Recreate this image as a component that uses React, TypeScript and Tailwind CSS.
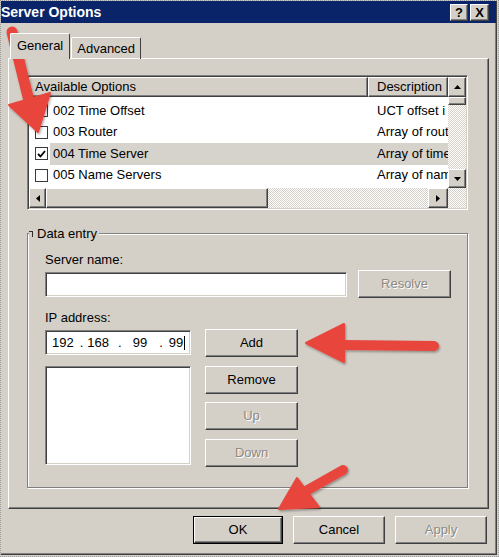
import React from "react";

const raised =
  "bg-[#d4d0c8] border border-t-white border-l-white border-r-[#404040] border-b-[#404040] shadow-[inset_-1px_-1px_0_#808080]";
const sunken =
  "bg-white border border-t-[#808080] border-l-[#808080] border-r-white border-b-white shadow-[inset_1px_1px_0_#404040,inset_-1px_-1px_0_#d4d0c8]";
const checker =
  "bg-[image:repeating-conic-gradient(#ffffff_0_25%,#d4d0c8_0_50%)] bg-[length:2px_2px]";
const disabledText = "text-[#8c8a85] [text-shadow:1px_1px_0_#ffffff]";

type Opt = { code: string; desc: string; checked: boolean; selected?: boolean };

// description column is scrolled/clipped in the dialog, only the visible part is kept
const options: Opt[] = [
  { code: "002 Time Offset", desc: "UCT offset i", checked: true },
  { code: "003 Router", desc: "Array of rout", checked: false },
  { code: "004 Time Server", desc: "Array of time", checked: true, selected: true },
  { code: "005 Name Servers", desc: "Array of nam", checked: false },
];

function Arrow({ dir }: { dir: "up" | "down" | "left" | "right" }) {
  const pts = {
    up: "0,4 7,4 3.5,0",
    down: "0,0 7,0 3.5,4",
    left: "4,0 4,7 0,3.5",
    right: "0,0 0,7 4,3.5",
  }[dir];
  const vertical = dir === "up" || dir === "down";
  return (
    <svg width={vertical ? 7 : 4} height={vertical ? 4 : 7} viewBox={vertical ? "0 0 7 4" : "0 0 4 7"}>
      <polygon points={pts} fill="#000" />
    </svg>
  );
}

function Checkbox({ checked }: { checked: boolean }) {
  return (
    <span className="flex h-[13px] w-[13px] shrink-0 items-center justify-center border border-[#3a3a3a] bg-white">
      {checked && (
        <svg width="9" height="8" viewBox="0 0 9 8">
          <polyline points="1,4 3.5,6.5 8,1" fill="none" stroke="#000" strokeWidth="1.8" />
        </svg>
      )}
    </span>
  );
}

function Button({
  label,
  disabled,
  className = "",
}: {
  label: string;
  disabled?: boolean;
  className?: string;
}) {
  return (
    <div className={`${raised} flex items-center justify-center ${className}`}>
      <span className={disabled ? disabledText : "text-black"}>{label}</span>
    </div>
  );
}

function OptionsList() {
  return (
    <div className={`${sunken} flex h-[135px] w-[441px] flex-col p-px`}>
      <div className="flex h-[111px]">
        <div className="flex min-w-0 flex-1 flex-col overflow-hidden">
          {/* column headers */}
          <div className="flex h-[20px] shrink-0">
            <div className={`${raised} flex w-[339px] items-center pl-[5px]`}>Available Options</div>
            <div className={`${raised} flex flex-1 items-center whitespace-nowrap pl-[8px]`}>Description</div>
          </div>
          <div className="pt-[3px]">
            {options.map((o) => (
              <div key={o.code} className="flex h-[21.5px] items-stretch">
                <div className="flex w-[21px] shrink-0 items-center pl-[6px]">
                  <Checkbox checked={o.checked} />
                </div>
                <div className={`flex min-w-0 flex-1 items-center ${o.selected ? "bg-[#d6d3cd]" : ""}`}>
                  <div className="w-[318px] shrink-0 whitespace-nowrap pl-[3px]">{o.code}</div>
                  <div className="min-w-0 flex-1 overflow-hidden whitespace-nowrap pl-[9px]">{o.desc}</div>
                </div>
              </div>
            ))}
          </div>
        </div>
        {/* vertical scrollbar */}
        <div className="flex w-[18px] shrink-0 flex-col">
          <div className={`${raised} flex h-[20px] items-center justify-center`}>
            <Arrow dir="up" />
          </div>
          <div className={`${raised} h-[8px]`} />
          <div className={`flex-1 ${checker}`} />
          <div className={`${raised} flex h-[19px] items-center justify-center`}>
            <Arrow dir="down" />
          </div>
        </div>
      </div>
      {/* horizontal scrollbar */}
      <div className="flex h-[20px]">
        <div className={`${raised} flex w-[17px] items-center justify-center`}>
          <Arrow dir="left" />
        </div>
        <div className={`${raised} w-[222px]`} />
        <div className={`flex-1 ${checker}`} />
        <div className={`${raised} flex w-[20px] items-center justify-center`}>
          <Arrow dir="right" />
        </div>
        <div className={`w-[18px] ${checker}`} />
      </div>
    </div>
  );
}

function DataEntry() {
  return (
    <fieldset className="mt-[16px] h-[262px] w-[441px] border border-[#808080] p-0 shadow-[inset_1px_1px_0_#ffffff,1px_1px_0_#ffffff]">
      <legend className="ml-[1px] flex items-center bg-[#d4d0c8] pr-[2px] leading-[15px]">
        <span className="mr-[4px] inline-block h-[6px] w-[4px] border-r border-t border-[#303030]" />
        Data entry
      </legend>
      <div className="pl-[17px] pt-[11px]">
        <div className="leading-[16px]">Server name:</div>
        <div className="mt-[2px] flex items-center">
          <div className={`${sunken} h-[25px] w-[302px]`} />
          <Button label="Resolve" disabled className="ml-[11px] h-[28px] w-[93px]" />
        </div>
        <div className="mt-[12px] leading-[16px]">IP address:</div>
        <div className="mt-[3px] flex">
          <div className="flex w-[146px] flex-col pt-px">
            <div className={`${sunken} flex h-[25px] items-center pl-[6px] leading-none`}>
              <span>192</span>
              <span className="ml-[6px]">.</span>
              <span className="ml-[4px]">168</span>
              <span className="ml-[9px]">.</span>
              <span className="ml-[11px]">99</span>
              <span className="ml-[12px]">.</span>
              <span className="ml-[6px]">99</span>
              <span className="ml-px h-[14px] w-px bg-black" />
            </div>
            <div className={`${sunken} mt-[11px] h-[99px]`} />
          </div>
          <div className="ml-[14px] flex flex-col">
            <Button label="Add" className="h-[28px] w-[93px]" />
            <Button label="Remove" className="mt-[9px] h-[28px] w-[93px]" />
            <Button label="Up" disabled className="mt-[8px] h-[28px] w-[93px]" />
            <Button label="Down" disabled className="mt-[9px] h-[28px] w-[93px]" />
          </div>
        </div>
      </div>
    </fieldset>
  );
}

function Overlay() {
  const red = "#e8453c";
  return (
    <svg className="pointer-events-none absolute left-0 top-0" width="499" height="557" viewBox="0 0 499 557">
      <defs>
        <filter id="sh" x="-20%" y="-20%" width="140%" height="140%">
          <feDropShadow dx="1" dy="1.5" stdDeviation="1.2" floodColor="#000" floodOpacity="0.35" />
        </filter>
      </defs>
      <g fill={red} stroke={red} filter="url(#sh)">
        <line x1="11" y1="31" x2="28" y2="100" strokeWidth="11" strokeLinecap="round" />
        <polygon points="8,104 49,92 37,131" strokeWidth="2" strokeLinejoin="round" />

        <line x1="340" y1="344" x2="433" y2="345" strokeWidth="10" strokeLinecap="round" />
        <polygon points="305,342 343,323 343,361" strokeWidth="2" strokeLinejoin="round" />

        <line x1="342" y1="469" x2="303" y2="491" strokeWidth="10" strokeLinecap="round" />
        <polygon points="278,508 296,477 318,506" strokeWidth="2" strokeLinejoin="round" />
      </g>
    </svg>
  );
}

export default function App() {
  return (
    <div className="relative h-[557px] w-[499px] overflow-hidden border border-dotted border-[#9c9c9c] bg-[#d4d0c8] font-['Liberation_Sans',Arial,sans-serif] text-[13px] leading-[16px] text-black">
      <div className="h-[554px] w-[496px] border-b border-r border-[#404040] shadow-[inset_-1px_-1px_0_#808080]">
        {/* title bar */}
        <div className="flex h-[22px] items-center justify-between bg-[#0a246a] pr-[7px]">
          <span className="text-[14px] font-bold text-white">Server Options</span>
          <div className="flex gap-[2px]">
            <div className={`${raised} flex h-[17px] w-[18px] items-center justify-center text-[13px] font-bold leading-none`}>?</div>
            <div className={`${raised} flex h-[17px] w-[19px] items-center justify-center text-[13px] font-bold leading-none`}>X</div>
          </div>
        </div>

        {/* tabs */}
        <div className="mt-[10px] flex h-[26px] items-end pl-[9px]">
          <div className="relative z-10 flex h-[26px] items-center rounded-t-[2px] border-l border-r border-t border-l-white border-r-[#404040] border-t-white bg-[#d4d0c8] px-[6px] pb-[2px]">
            General
          </div>
          <div className="ml-px flex h-[22px] items-center rounded-t-[2px] border-l border-r border-t border-l-white border-r-[#404040] border-t-white px-[5px]">
            Advanced
          </div>
        </div>

        {/* tab page */}
        <div className="-mt-px ml-[7px] h-[451px] w-[481px] border border-b-[#404040] border-l-white border-r-[#404040] border-t-white pl-[18px] pt-[16px] shadow-[inset_-1px_-1px_0_#808080]">
          <OptionsList />
          <DataEntry />
        </div>

        {/* dialog buttons */}
        <div className="mt-[7px] flex gap-[10px] pl-[192px]">
          <div className="h-[28px] w-[90px] border border-black">
            <Button label="OK" className="h-full w-full" />
          </div>
          <Button label="Cancel" className="h-[28px] w-[92px]" />
          <Button label="Apply" disabled className="h-[28px] w-[92px]" />
        </div>
      </div>
      <Overlay />
    </div>
  );
}
